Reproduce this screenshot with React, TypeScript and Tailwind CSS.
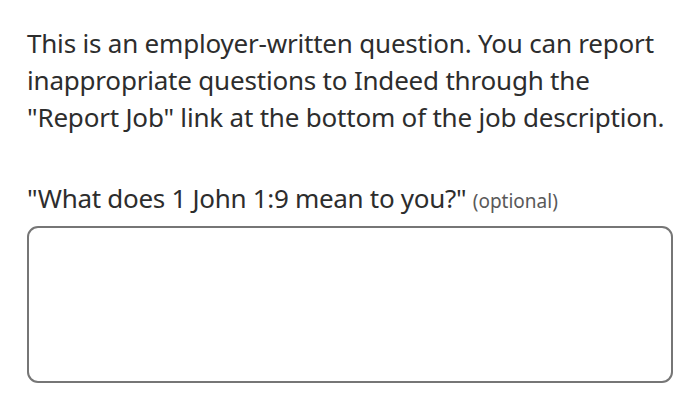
import React from "react";

const App = () => {
  return (
    <div className="w-[700px] h-[418px] bg-white px-[27px] pt-[25px] font-['Noto_Sans',sans-serif] text-[#2d2d2d]">
      <p className="text-[26px] leading-[37px] tracking-[-0.2px]">
        This is an employer-written question. You can report
        <br />
        inappropriate questions to Indeed through the
        <br />
        "Report Job" link at the bottom of the job description.
      </p>
      <div className="mt-[44px]">
        <label className="block text-[26px] leading-[37px] tracking-[-0.3px]">
          "What does 1 John 1:9 mean to you?"{" "}
          <span className="text-[19px] tracking-normal text-[#595959]">(optional)</span>
        </label>
        <textarea className="mt-[6px] block w-[646px] h-[157px] rounded-[11px] border-2 border-[#767676] resize-none outline-none" />
      </div>
    </div>
  );
};

export default App;
